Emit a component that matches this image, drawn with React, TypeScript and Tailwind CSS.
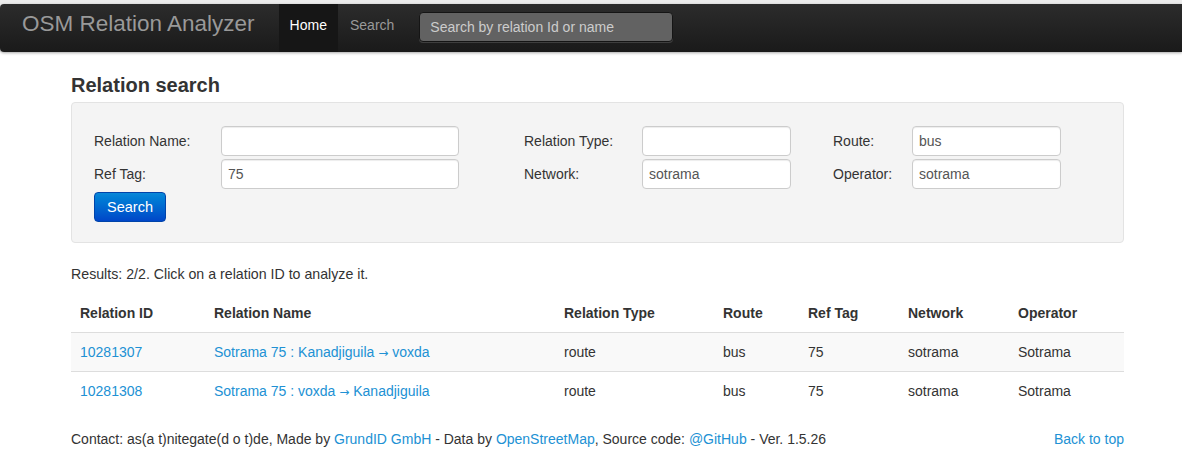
const font = "font-['Liberation_Sans',Arial,sans-serif]";

const rows = [
  { id: '10281307', from: 'Kanadjiguila', to: 'voxda' },
  { id: '10281308', from: 'voxda', to: 'Kanadjiguila' },
];

function Field({ value }: { value?: string }) {
  return (
    <input
      readOnly
      value={value ?? ''}
      className="h-[30px] w-full rounded-[4px] border border-[#cccccc] bg-white px-[6px] text-[14px] text-[#555555] shadow-[inset_0_1px_1px_rgba(0,0,0,0.075)] outline-none"
    />
  );
}

function Arrow() {
  return <span className="font-['DejaVu_Sans',sans-serif] text-[12px] leading-[0]">→</span>;
}

export default function App() {
  return (
    <div className={`${font} min-h-[462px] w-full bg-white text-[14px] leading-[20px] text-[#333333]`}>
      {/* top bar */}
      <div className="bg-[#ececec] pt-[4px]">
        <div className="flex h-[48px] items-stretch rounded-l-[4px] bg-gradient-to-b from-[#2c2c2c] to-[#1a1a1a] shadow-[0_1px_3px_rgba(0,0,0,0.35)]">
          <span className="ml-[22px] mr-[24px] flex items-center pb-[8px] text-[22.5px] text-[#999999]">OSM Relation Analyzer</span>
          <a className="flex items-center bg-[#161616] px-[11px] pb-[7px] text-white">Home</a>
          <a className="flex items-center px-[12px] pb-[7px] text-[#999999]">Search</a>
          <div className="ml-[13px] mt-[8px] flex h-[30px] w-[254px] items-center self-start rounded-[4px] border border-[#151515] bg-[#626262] px-[10px] text-[14px] text-[#cccccc] shadow-[0_1px_0_rgba(255,255,255,0.15)]">
            Search by relation Id or name
          </div>
        </div>
      </div>

      <div className="ml-[71px] w-[1053px]">
        <h2 className="mt-[23px] text-[20px] font-bold leading-[20px]">Relation search</h2>

        <div className="mt-[7px] rounded-[4px] border border-[#e3e3e3] bg-[#f4f4f4] pb-[20px] pl-[22px] pt-[23px]">
          <div className="grid grid-cols-[127px_238px_65px_118px_149px_42px_79px_149px] items-center gap-y-[3px]">
            <span>Relation Name:</span>
            <Field />
            <span />
            <span>Relation Type:</span>
            <Field />
            <span />
            <span>Route:</span>
            <Field value="bus" />

            <span>Ref Tag:</span>
            <Field value="75" />
            <span />
            <span>Network:</span>
            <Field value="sotrama" />
            <span />
            <span>Operator:</span>
            <Field value="sotrama" />
          </div>
          <button className="mt-[3px] h-[30px] rounded-[4px] border border-[#0044aa] bg-gradient-to-b from-[#0a88d8] to-[#0046c8] px-[12px] text-[14.5px] text-white">
            Search
          </button>
        </div>

        <p className="mt-[21px] text-[14.2px]">Results: 2/2. Click on a relation ID to analyze it.</p>

        <table className="mt-[10px] w-full border-collapse text-left">
          <thead>
            <tr className="font-bold">
              <th className="w-[134px] px-[9px] py-[9px]">Relation ID</th>
              <th className="w-[350px] px-[9px] py-[9px]">Relation Name</th>
              <th className="w-[159px] px-[9px] py-[9px]">Relation Type</th>
              <th className="w-[85px] px-[9px] py-[9px]">Route</th>
              <th className="w-[100px] px-[9px] py-[9px]">Ref Tag</th>
              <th className="w-[110px] px-[9px] py-[9px]">Network</th>
              <th className="px-[9px] py-[9px]">Operator</th>
            </tr>
          </thead>
          <tbody>
            {rows.map((r, i) => (
              <tr key={r.id} className={i === 0 ? 'bg-[#f9f9f9]' : ''}>
                <td className="border-t border-[#dddddd] px-[9px] py-[9px] text-[#2191d4]">{r.id}</td>
                <td className="border-t border-[#dddddd] px-[9px] py-[9px] text-[#2191d4]">
                  Sotrama 75 : {r.from} <Arrow /> {r.to}
                </td>
                <td className="border-t border-[#dddddd] px-[9px] py-[9px]">route</td>
                <td className="border-t border-[#dddddd] px-[9px] py-[9px]">bus</td>
                <td className="border-t border-[#dddddd] px-[9px] py-[9px]">75</td>
                <td className="border-t border-[#dddddd] px-[9px] py-[9px]">sotrama</td>
                <td className="border-t border-[#dddddd] px-[9px] py-[9px]">Sotrama</td>
              </tr>
            ))}
          </tbody>
        </table>

        <footer className="mt-[19px] flex justify-between">
          <p>
            Contact: as(a t)nitegate(d o t)de, Made by <a className="text-[#2191d4]">GrundID GmbH</a> - Data by{' '}
            <a className="text-[#2191d4]">OpenStreetMap</a>, Source code: <a className="text-[#2191d4]">@GitHub</a> - Ver. 1.5.26
          </p>
          <a className="text-[#2191d4]">Back to top</a>
        </footer>
      </div>
    </div>
  );
}
